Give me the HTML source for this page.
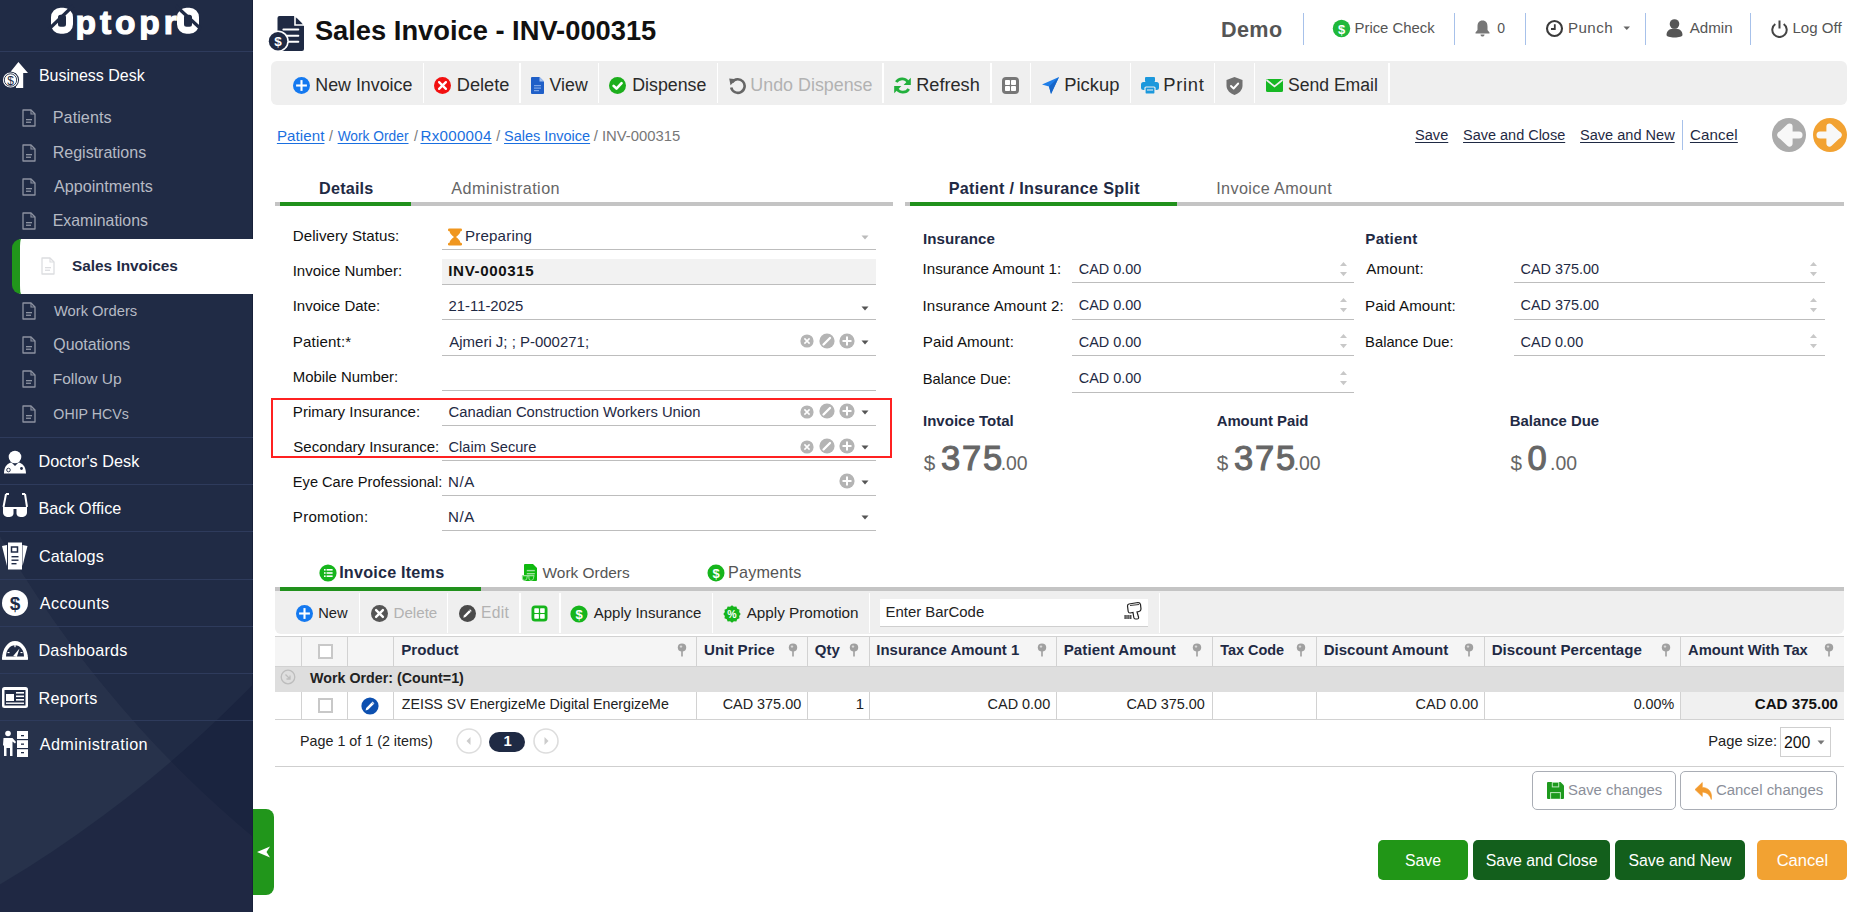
<!DOCTYPE html>
<html><head><meta charset="utf-8"><title>Sales Invoice</title>
<style>
html,body{margin:0;padding:0;width:1857px;height:912px;overflow:hidden;background:#fff;}
body{position:relative;font-family:"Liberation Sans",sans-serif;}
.t{position:absolute;white-space:nowrap;line-height:1;}
.b{position:absolute;}
.u{text-decoration:underline;text-underline-offset:2px;text-decoration-thickness:1px;}
</style></head><body>
<div class="b" style="left:0px;top:0px;width:253px;height:912px;background:#202b45;overflow:hidden"></div>
<svg class="b" style="left:0;top:0" width="253" height="912" viewBox="0 0 253 912"><path fill-rule="evenodd" d="M-10 -10 H263 V922 H-10 Z M-153 -32 A1133 1133 0 1 0 2113 -32 A1133 1133 0 1 0 -153 -32 Z" fill="#ffffff" fill-opacity="0.035"/><path fill-rule="evenodd" d="M-10 -10 H263 V922 H-10 Z M-1884 -184 A1245 1245 0 1 0 606 -184 A1245 1245 0 1 0 -1884 -184 Z" fill="#0c1333" fill-opacity="0.3"/></svg>
<div class="b" style="left:252px;top:0px;width:1px;height:912px;background:#18213a"></div>
<svg class="b" style="left:0px;top:0px" width="253" height="50" viewBox="0 0 253 50"><g fill="none" stroke="#fff" stroke-width="7"><rect x="54.5" y="11.3" width="15" height="19" rx="6"/><rect x="180.5" y="11.3" width="15" height="19" rx="6"/></g><line x1="73" y1="6" x2="49" y2="29" stroke="#202b45" stroke-width="3.2"/><line x1="176" y1="6" x2="201" y2="29" stroke="#202b45" stroke-width="3.2"/></svg>
<div class="b" style="left:0;top:0;width:253px;height:40px;overflow:hidden">
<div class="t " style="left:75.52px;top:6.100px;font-size:33.50px;color:#fff;font-weight:bold;letter-spacing:3.897px;-webkit-text-stroke:1.2px #fff;">ptopr</div>
</div>
<div class="b" style="left:0px;top:51px;width:253px;height:1px;background:#2e3b5c"></div>
<svg class="b" style="left:0px;top:0px" width="40" height="100" viewBox="0 0 40 100"><path d="M18.4 62 L28 73 L23.2 73 L23.2 88 L16 88 L16 73 L9.6 73 Z" fill="#fff"/><circle cx="10.5" cy="80" r="8.6" fill="#202b45"/><circle cx="10.5" cy="80" r="7.6" fill="#fff"/><circle cx="10.5" cy="80" r="6.2" fill="none" stroke="#202b45" stroke-width="0.9"/><text x="10.5" y="84.6" font-size="12" font-family="Liberation Sans" text-anchor="middle" fill="#202b45">$</text></svg>
<div class="t " style="left:38.92px;top:68.105px;font-size:15.99px;color:#fff;">Business Desk</div>
<svg class="b" style="left:22px;top:109.2px" width="14" height="18" viewBox="0 0 14 18"><path d="M1 1 H9 L13 5 V17 H1 Z" fill="none" stroke="#8d93a1" stroke-width="1.3" stroke-linejoin="round"/><path d="M9 1 V5 H13" fill="none" stroke="#8d93a1" stroke-width="1.1"/><rect x="4" y="10" width="6" height="1.3" fill="#8d93a1"/><rect x="4" y="12.6" width="5" height="1.3" fill="#8d93a1"/></svg>
<div class="t " style="left:52.70px;top:109.109px;font-size:16.20px;color:#b6bac4;letter-spacing:0.071px;">Patients</div>
<svg class="b" style="left:22px;top:143.6px" width="14" height="18" viewBox="0 0 14 18"><path d="M1 1 H9 L13 5 V17 H1 Z" fill="none" stroke="#8d93a1" stroke-width="1.3" stroke-linejoin="round"/><path d="M9 1 V5 H13" fill="none" stroke="#8d93a1" stroke-width="1.1"/><rect x="4" y="10" width="6" height="1.3" fill="#8d93a1"/><rect x="4" y="12.6" width="5" height="1.3" fill="#8d93a1"/></svg>
<div class="t " style="left:52.72px;top:144.116px;font-size:16.03px;color:#b6bac4;">Registrations</div>
<svg class="b" style="left:22px;top:178.2px" width="14" height="18" viewBox="0 0 14 18"><path d="M1 1 H9 L13 5 V17 H1 Z" fill="none" stroke="#8d93a1" stroke-width="1.3" stroke-linejoin="round"/><path d="M9 1 V5 H13" fill="none" stroke="#8d93a1" stroke-width="1.1"/><rect x="4" y="10" width="6" height="1.3" fill="#8d93a1"/><rect x="4" y="12.6" width="5" height="1.3" fill="#8d93a1"/></svg>
<div class="t " style="left:54.00px;top:178.110px;font-size:16.17px;color:#b6bac4;">Appointments</div>
<svg class="b" style="left:22px;top:212.4px" width="14" height="18" viewBox="0 0 14 18"><path d="M1 1 H9 L13 5 V17 H1 Z" fill="none" stroke="#8d93a1" stroke-width="1.3" stroke-linejoin="round"/><path d="M9 1 V5 H13" fill="none" stroke="#8d93a1" stroke-width="1.1"/><rect x="4" y="10" width="6" height="1.3" fill="#8d93a1"/><rect x="4" y="12.6" width="5" height="1.3" fill="#8d93a1"/></svg>
<div class="t " style="left:52.73px;top:213.109px;font-size:15.86px;color:#b6bac4;">Examinations</div>
<div class="b" style="left:12px;top:239px;width:241px;height:55px;background:#fff;border-radius:9px 0 0 9px;border-left:8px solid #21961b;box-sizing:border-box"></div>
<svg class="b" style="left:41px;top:257px" width="14" height="18" viewBox="0 0 14 18"><path d="M1 1 H9 L13 5 V17 H1 Z" fill="none" stroke="#dcdde0" stroke-width="1.3" stroke-linejoin="round"/><path d="M9 1 V5 H13" fill="none" stroke="#dcdde0" stroke-width="1.1"/><rect x="4" y="10" width="6" height="1.3" fill="#dcdde0"/><rect x="4" y="12.6" width="5" height="1.3" fill="#dcdde0"/></svg>
<div class="t " style="left:71.94px;top:258.113px;font-size:15.38px;color:#1f2a44;font-weight:bold;">Sales Invoices</div>
<svg class="b" style="left:22px;top:302.2px" width="14" height="18" viewBox="0 0 14 18"><path d="M1 1 H9 L13 5 V17 H1 Z" fill="none" stroke="#8d93a1" stroke-width="1.3" stroke-linejoin="round"/><path d="M9 1 V5 H13" fill="none" stroke="#8d93a1" stroke-width="1.1"/><rect x="4" y="10" width="6" height="1.3" fill="#8d93a1"/><rect x="4" y="12.6" width="5" height="1.3" fill="#8d93a1"/></svg>
<div class="t " style="left:53.93px;top:304.104px;font-size:14.74px;color:#b6bac4;">Work Orders</div>
<svg class="b" style="left:22px;top:336.4px" width="14" height="18" viewBox="0 0 14 18"><path d="M1 1 H9 L13 5 V17 H1 Z" fill="none" stroke="#8d93a1" stroke-width="1.3" stroke-linejoin="round"/><path d="M9 1 V5 H13" fill="none" stroke="#8d93a1" stroke-width="1.1"/><rect x="4" y="10" width="6" height="1.3" fill="#8d93a1"/><rect x="4" y="12.6" width="5" height="1.3" fill="#8d93a1"/></svg>
<div class="t " style="left:53.28px;top:337.109px;font-size:15.92px;color:#b6bac4;">Quotations</div>
<svg class="b" style="left:22px;top:370.4px" width="14" height="18" viewBox="0 0 14 18"><path d="M1 1 H9 L13 5 V17 H1 Z" fill="none" stroke="#8d93a1" stroke-width="1.3" stroke-linejoin="round"/><path d="M9 1 V5 H13" fill="none" stroke="#8d93a1" stroke-width="1.1"/><rect x="4" y="10" width="6" height="1.3" fill="#8d93a1"/><rect x="4" y="12.6" width="5" height="1.3" fill="#8d93a1"/></svg>
<div class="t " style="left:52.76px;top:371.108px;font-size:15.51px;color:#b6bac4;">Follow Up</div>
<svg class="b" style="left:22px;top:405.0px" width="14" height="18" viewBox="0 0 14 18"><path d="M1 1 H9 L13 5 V17 H1 Z" fill="none" stroke="#8d93a1" stroke-width="1.3" stroke-linejoin="round"/><path d="M9 1 V5 H13" fill="none" stroke="#8d93a1" stroke-width="1.1"/><rect x="4" y="10" width="6" height="1.3" fill="#8d93a1"/><rect x="4" y="12.6" width="5" height="1.3" fill="#8d93a1"/></svg>
<div class="t " style="left:53.36px;top:407.113px;font-size:14.19px;color:#b6bac4;">OHIP HCVs</div>
<div class="b" style="left:0px;top:437px;width:253px;height:1px;background:#2e3b5c"></div>
<div class="t " style="left:38.40px;top:453.109px;font-size:16.20px;color:#fff;letter-spacing:0.061px;">Doctor's Desk</div>
<div class="b" style="left:0px;top:484px;width:253px;height:1px;background:#2e3b5c"></div>
<div class="t " style="left:38.40px;top:500.109px;font-size:16.20px;color:#fff;letter-spacing:0.041px;">Back Office</div>
<div class="b" style="left:0px;top:531px;width:253px;height:1px;background:#2e3b5c"></div>
<div class="t " style="left:38.89px;top:548.109px;font-size:16.20px;color:#fff;letter-spacing:0.153px;">Catalogs</div>
<div class="b" style="left:0px;top:579px;width:253px;height:1px;background:#2e3b5c"></div>
<div class="t " style="left:39.70px;top:595.109px;font-size:16.20px;color:#fff;letter-spacing:0.415px;">Accounts</div>
<div class="b" style="left:0px;top:626px;width:253px;height:1px;background:#2e3b5c"></div>
<div class="t " style="left:38.40px;top:642.109px;font-size:16.20px;color:#fff;letter-spacing:0.172px;">Dashboards</div>
<div class="b" style="left:0px;top:673px;width:253px;height:1px;background:#2e3b5c"></div>
<div class="t " style="left:38.40px;top:690.109px;font-size:16.20px;color:#fff;letter-spacing:0.360px;">Reports</div>
<div class="b" style="left:0px;top:720px;width:253px;height:1px;background:#2e3b5c"></div>
<div class="t " style="left:39.70px;top:736.109px;font-size:16.20px;color:#fff;letter-spacing:0.411px;">Administration</div>
<svg class="b" style="left:0px;top:440px" width="34" height="40" viewBox="0 0 34 40"><circle cx="15" cy="17" r="6.3" fill="#fff"/><path d="M4 33.5 C4 26 8 23 11.5 22.5 L15 26 L18.5 22.5 C22 23 26 26 26 33.5 Z" fill="#fff"/><circle cx="8.5" cy="30" r="1.8" fill="none" stroke="#202b45" stroke-width="0.9"/><circle cx="21.5" cy="28.5" r="1.4" fill="#202b45"/></svg>
<svg class="b" style="left:0px;top:490px" width="34" height="32" viewBox="0 0 34 32"><path d="M6 4 L9 4 M6 4 L3.5 17" stroke="#fff" stroke-width="2" fill="none"/><path d="M25 4 L22 4 M25 4 L27 17" stroke="#fff" stroke-width="2" fill="none"/><path d="M3 17 H13.5 V23 C13.5 26 11.5 27 8.5 27 C5 27 3 25.5 3 22 Z" fill="#fff"/><path d="M16.5 17 H27 V22 C27 25.5 25 27 21.5 27 C18.5 27 16.5 26 16.5 23 Z" fill="#fff"/><rect x="13" y="17" width="4" height="2" fill="#fff"/></svg>
<svg class="b" style="left:0px;top:540px" width="34" height="32" viewBox="0 0 34 32"><path d="M2 6 L7 5 L7 26 Z" fill="#fff"/><path d="M27.5 6 L22.5 5 L22.5 26 Z" fill="#fff"/><rect x="8" y="2.5" width="14" height="27" fill="#fff"/><rect x="11.5" y="7" width="6" height="5" fill="none" stroke="#202b45" stroke-width="1.5"/><rect x="11.5" y="16" width="7" height="1.4" fill="#202b45"/><rect x="11.5" y="19.5" width="7" height="1.4" fill="#202b45"/><rect x="11.5" y="23" width="5" height="1.4" fill="#202b45"/></svg>
<svg class="b" style="left:0px;top:588px" width="34" height="32" viewBox="0 0 34 32"><circle cx="15" cy="15" r="13" fill="#fff"/><text x="15" y="22" font-size="19" font-weight="bold" font-family="Liberation Sans" text-anchor="middle" fill="#202b45">$</text></svg>
<svg class="b" style="left:0px;top:638px" width="34" height="26" viewBox="0 0 34 26"><path d="M2 21.5 C2 10.5 8 3 15 3 C22 3 28 10.5 28 21.5 Z" fill="#fff"/><path d="M6 18.5 C6 12 10 7.2 15 7.2 C20 7.2 24 12 24 18.5 Z" fill="#202b45"/><path d="M13.2 18 L19.5 10.5 L16.8 19 Z" fill="#fff"/><rect x="14.4" y="7" width="1.2" height="2.2" fill="#fff"/><rect x="7.5" y="14" width="2" height="1.1" fill="#fff"/><rect x="20.5" y="14" width="2" height="1.1" fill="#fff"/><rect x="2" y="19" width="26" height="2.8" rx="0.8" fill="#fff"/></svg>
<svg class="b" style="left:0px;top:684px" width="34" height="28" viewBox="0 0 34 28"><rect x="2" y="3" width="26" height="21" rx="2.5" fill="#fff"/><rect x="4.5" y="6" width="21" height="15.5" fill="#202b45"/><rect x="6" y="10" width="8" height="7" fill="#fff"/><rect x="16" y="8" width="8" height="1.6" fill="#fff"/><rect x="16" y="11.5" width="8" height="1.6" fill="#fff"/><rect x="16" y="15" width="8" height="1.6" fill="#fff"/><rect x="6" y="18.5" width="18" height="1.4" fill="#fff"/></svg>
<svg class="b" style="left:0px;top:728px" width="34" height="32" viewBox="0 0 34 32"><circle cx="8" cy="5.5" r="2.8" fill="#fff"/><path d="M3.5 10 H12.5 L16 14 L15 15.5 L12.5 13.5 V28 H10 V20 H6.5 V28 H4 V18 L3 17 Z" fill="#fff"/><rect x="17" y="3" width="11" height="26" fill="#fff"/><rect x="17" y="11" width="11" height="1.2" fill="#202b45"/><rect x="17" y="20" width="11" height="1.2" fill="#202b45"/><rect x="21" y="7" width="3" height="1.3" fill="#202b45"/><rect x="21" y="15.5" width="3" height="1.3" fill="#202b45"/><rect x="21" y="24" width="3" height="1.3" fill="#202b45"/></svg>
<div class="b" style="left:253px;top:809px;width:21px;height:86px;background:#21961b;border-radius:0 8px 8px 0"></div>
<svg class="b" style="left:253px;top:840px" width="21" height="24" viewBox="0 0 21 24"><path d="M4 12 L17 6.5 L13.5 12 L17 17.5 Z" fill="#fff"/></svg>
<svg class="b" style="left:264px;top:12px" width="44" height="44" viewBox="0 0 44 44"><path d="M13.5 6 Q13.5 4 15.5 4 H30.2 L40 13.8 V37 Q40 39 38 39 H15.5 Q13.5 39 13.5 37 Z" fill="#1f2a44"/><path d="M31 3 V13 H41" fill="none" stroke="#fff" stroke-width="1.6"/><path d="M32.3 5.5 L38.6 11.8 H32.3 Z" fill="#1f2a44"/><rect x="18.4" y="16.4" width="16.9" height="2" rx="1" fill="#fff"/><rect x="18.4" y="22.7" width="16.9" height="2" rx="1" fill="#fff"/><rect x="18.4" y="28.7" width="16.9" height="2" rx="1" fill="#fff"/><circle cx="14" cy="29.2" r="10.8" fill="#fff"/><circle cx="14" cy="29.2" r="9.2" fill="#1f2a44"/><text x="14" y="34.4" font-size="13.5" font-weight="bold" font-family="Liberation Sans" text-anchor="middle" fill="#fff">$</text></svg>
<div class="t " style="left:314.88px;top:17.102px;font-size:27.31px;color:#111;font-weight:bold;">Sales Invoice - INV-000315</div>
<div class="t " style="left:1221.00px;top:19.113px;font-size:21.60px;color:#555;font-weight:bold;letter-spacing:0.371px;">Demo</div>
<div class="b" style="left:1303px;top:13px;width:1px;height:32px;background:#a7c1ea"></div>
<div class="b" style="left:1454px;top:13px;width:1px;height:32px;background:#a7c1ea"></div>
<div class="b" style="left:1525px;top:13px;width:1px;height:32px;background:#a7c1ea"></div>
<div class="b" style="left:1645px;top:13px;width:1px;height:32px;background:#a7c1ea"></div>
<div class="b" style="left:1750px;top:13px;width:1px;height:32px;background:#a7c1ea"></div>
<svg class="b" style="left:1332px;top:19px" width="19" height="19" viewBox="0 0 19 19"><circle cx="9.5" cy="9.5" r="8.7" fill="#1fb83a"/><text x="9.5" y="14.5" font-size="13" font-weight="bold" font-family="Liberation Sans" text-anchor="middle" fill="#fff">$</text></svg>
<div class="t " style="left:1354.51px;top:21.114px;font-size:14.88px;color:#555;">Price Check</div>
<svg class="b" style="left:1474px;top:19px" width="17" height="18" viewBox="0 0 17 18"><path d="M8.5 1.5 C5 1.5 3.5 4 3.5 7.5 V11 L1.5 13.5 V14.5 H15.5 V13.5 L13.5 11 V7.5 C13.5 4 12 1.5 8.5 1.5 Z" fill="#777"/><path d="M6.5 15.5 H10.5 C10.5 17 9.5 17.5 8.5 17.5 C7.5 17.5 6.5 17 6.5 15.5Z" fill="#777"/></svg>
<div class="t " style="left:1497.14px;top:21.100px;font-size:14.00px;color:#555;">0</div>
<svg class="b" style="left:1545px;top:19px" width="19" height="19" viewBox="0 0 19 19"><circle cx="9.5" cy="9.5" r="7.5" fill="none" stroke="#3a3a3a" stroke-width="2.1"/><path d="M9.8 5.2 V10 H6" fill="none" stroke="#3a3a3a" stroke-width="1.8"/></svg>
<div class="t " style="left:1567.99px;top:20.102px;font-size:15.12px;color:#555;letter-spacing:0.438px;">Punch</div>
<svg class="b" style="left:1622px;top:25px" width="10" height="6" viewBox="0 0 10 6"><path d="M1.5 1.5 H8 L4.75 5 Z" fill="#666"/></svg>
<svg class="b" style="left:1665px;top:18px" width="19" height="20" viewBox="0 0 19 20"><circle cx="9.5" cy="6" r="4.8" fill="#555"/><path d="M1.5 17 C1.5 12.5 5 10.5 9.5 10.5 C14 10.5 17.5 12.5 17.5 17 C17.5 18.5 14 19.5 9.5 19.5 C5 19.5 1.5 18.5 1.5 17Z" fill="#555"/></svg>
<div class="t " style="left:1689.70px;top:20.102px;font-size:15.12px;color:#555;letter-spacing:0.011px;">Admin</div>
<svg class="b" style="left:1770px;top:19px" width="19" height="19" viewBox="0 0 19 19"><path d="M5.3 5 A7.2 7.2 0 1 0 13.7 5" fill="none" stroke="#444" stroke-width="2"/><rect x="8.5" y="1.5" width="2" height="8" fill="#444"/></svg>
<div class="t " style="left:1792.49px;top:20.112px;font-size:15.07px;color:#555;">Log Off</div>
<div class="b" style="left:271px;top:60.7px;width:1576px;height:44.7px;background:#efefef;border-radius:6px"></div>
<div class="b" style="left:422.8px;top:63px;width:1.4px;height:40px;background:#ffffff"></div>
<div class="b" style="left:519.2px;top:63px;width:1.4px;height:40px;background:#ffffff"></div>
<div class="b" style="left:597.8px;top:63px;width:1.4px;height:40px;background:#ffffff"></div>
<div class="b" style="left:716.8px;top:63px;width:1.4px;height:40px;background:#ffffff"></div>
<div class="b" style="left:882.2px;top:63px;width:1.4px;height:40px;background:#ffffff"></div>
<div class="b" style="left:990.4px;top:63px;width:1.4px;height:40px;background:#ffffff"></div>
<div class="b" style="left:1029.8px;top:63px;width:1.4px;height:40px;background:#ffffff"></div>
<div class="b" style="left:1129.8px;top:63px;width:1.4px;height:40px;background:#ffffff"></div>
<div class="b" style="left:1213.8px;top:63px;width:1.4px;height:40px;background:#ffffff"></div>
<div class="b" style="left:1253.8px;top:63px;width:1.4px;height:40px;background:#ffffff"></div>
<div class="b" style="left:1388.2px;top:63px;width:1.4px;height:40px;background:#ffffff"></div>
<svg class="b" style="left:293px;top:77px" width="17" height="17" viewBox="0 0 17 17"><circle cx="8.5" cy="8.5" r="8.5" fill="#1479f0"/><rect x="7.45" y="3.0999999999999996" width="2.1" height="10.8" fill="#fff"/><rect x="3.0999999999999996" y="7.45" width="10.8" height="2.1" fill="#fff"/></svg>
<div class="t " style="left:315.27px;top:77.102px;font-size:17.84px;color:#2a2a2a;">New Invoice</div>
<svg class="b" style="left:433.5px;top:77px" width="17" height="17" viewBox="0 0 17 17"><circle cx="8.5" cy="8.5" r="8.5" fill="#f21010"/><path d="M5.1 5.1 L11.9 11.9 M11.9 5.1 L5.1 11.9" stroke="#fff" stroke-width="2.3" stroke-linecap="round"/></svg>
<div class="t " style="left:456.74px;top:76.109px;font-size:18.23px;color:#2a2a2a;">Delete</div>
<svg class="b" style="left:530px;top:76px" width="15" height="19" viewBox="0 0 15 19"><path d="M1 2 Q1 1 2 1 H9.5 L14 5.5 V17 Q14 18 13 18 H2 Q1 18 1 17 Z" fill="#1f5fc8"/><path d="M9.5 1 V5.5 H14" fill="#9fbff0"/><rect x="4" y="9" width="7" height="1.2" fill="#7fa6e6"/><rect x="4" y="11.5" width="7" height="1.2" fill="#7fa6e6"/><rect x="4" y="14" width="5" height="1.2" fill="#7fa6e6"/></svg>
<div class="t " style="left:549.61px;top:77.102px;font-size:17.72px;color:#2a2a2a;">View</div>
<svg class="b" style="left:609px;top:77px" width="17" height="17" viewBox="0 0 17 17"><circle cx="8.5" cy="8.5" r="8.5" fill="#1cae1c"/><path d="M4.59 8.84 L7.48 11.56 L12.58 6.12" fill="none" stroke="#fff" stroke-width="2.6" stroke-linecap="round" stroke-linejoin="round"/></svg>
<div class="t " style="left:632.28px;top:77.102px;font-size:17.78px;color:#2a2a2a;">Dispense</div>
<svg class="b" style="left:728px;top:76px" width="19" height="19" viewBox="0 0 19 19"><path d="M4.2 6.2 A6.8 6.8 0 1 1 3.2 11.5" fill="none" stroke="#666" stroke-width="2.6"/><path d="M1.2 2.5 L8.5 3.2 L2.5 9.2 Z" fill="#666"/></svg>
<div class="t " style="left:750.36px;top:77.109px;font-size:17.86px;color:#b2b2b2;">Undo Dispense</div>
<svg class="b" style="left:893px;top:76px" width="19" height="19" viewBox="0 0 19 19"><path d="M15.5 7 A7 7 0 0 0 3.2 6" fill="none" stroke="#22b03c" stroke-width="2.8"/><path d="M3.5 12 A7 7 0 0 0 15.8 13" fill="none" stroke="#22b03c" stroke-width="2.8"/><path d="M17.8 1.8 V9 H10.6 Z" fill="#22b03c"/><path d="M1.2 17.2 V10 H8.4 Z" fill="#22b03c"/></svg>
<div class="t " style="left:916.25px;top:76.101px;font-size:18.15px;color:#2a2a2a;">Refresh</div>
<svg class="b" style="left:1001px;top:76px" width="19" height="19" viewBox="0 0 19 19"><rect x="1" y="1" width="17" height="17" rx="4" fill="#777"/><rect x="4" y="4" width="5" height="5" rx="0.8" fill="#fff"/><rect x="10" y="4" width="5" height="5" rx="0.8" fill="#fff"/><rect x="4" y="10" width="5" height="5" rx="0.8" fill="#fff"/><rect x="10" y="10" width="5" height="5" rx="0.8" fill="#fff"/></svg>
<svg class="b" style="left:1041px;top:76px" width="19" height="19" viewBox="0 0 19 19"><path d="M18 1 L1 8.5 L8 10.5 L10 18 Z" fill="#1f7ee8"/><path d="M18 1 L8 10.5 L10 18 Z" fill="#1665c8"/></svg>
<div class="t " style="left:1064.23px;top:76.107px;font-size:18.36px;color:#2a2a2a;letter-spacing:0.025px;">Pickup</div>
<svg class="b" style="left:1140px;top:76px" width="20" height="19" viewBox="0 0 20 19"><rect x="5" y="1" width="10" height="5" rx="1" fill="#1c98dc"/><rect x="1" y="6" width="18" height="8" rx="2.5" fill="#1c98dc"/><rect x="5" y="11" width="10" height="7" rx="1" fill="#1c98dc" stroke="#efefef" stroke-width="1.2"/><rect x="7" y="13.5" width="6" height="1" fill="#efefef"/></svg>
<div class="t " style="left:1163.23px;top:76.107px;font-size:18.36px;color:#2a2a2a;letter-spacing:0.708px;">Print</div>
<svg class="b" style="left:1225px;top:76px" width="19" height="20" viewBox="0 0 19 20"><path d="M9.5 1 L17.5 4 V9.5 C17.5 14 14 17.5 9.5 19 C5 17.5 1.5 14 1.5 9.5 V4 Z" fill="#707070"/><path d="M6 10 L8.6 12.5 L13.2 7.5" fill="none" stroke="#fff" stroke-width="1.9" stroke-linecap="round" stroke-linejoin="round"/></svg>
<svg class="b" style="left:1265px;top:77px" width="19" height="17" viewBox="0 0 19 17"><rect x="1" y="2" width="17" height="13" rx="1.5" fill="#17b824"/><path d="M1.5 3 L9.5 9.5 L17.5 3" fill="none" stroke="#efefef" stroke-width="1.7"/></svg>
<div class="t " style="left:1287.91px;top:77.112px;font-size:17.60px;color:#2a2a2a;">Send Email</div>
<div class="t u" style="left:276.89px;top:128.102px;font-size:15.12px;color:#1a6fe0;letter-spacing:0.077px;">Patient</div>
<div class="t " style="left:329.10px;top:129.100px;font-size:14.00px;color:#777;">/</div>
<div class="t u" style="left:337.63px;top:130.115px;font-size:13.78px;color:#1a6fe0;">Work Order</div>
<div class="t " style="left:414.10px;top:129.100px;font-size:14.00px;color:#777;">/</div>
<div class="t u" style="left:420.49px;top:128.102px;font-size:15.12px;color:#1a6fe0;letter-spacing:0.291px;">Rx000004</div>
<div class="t " style="left:496.30px;top:129.100px;font-size:14.00px;color:#777;">/</div>
<div class="t u" style="left:504.05px;top:129.115px;font-size:14.47px;color:#1a6fe0;">Sales Invoice</div>
<div class="t " style="left:593.70px;top:129.102px;font-size:14.84px;color:#777;">/ INV-000315</div>
<div class="t u" style="left:1415.04px;top:128.108px;font-size:14.58px;color:#1f2a44;">Save</div>
<div class="t u" style="left:1463.05px;top:128.110px;font-size:14.48px;color:#1f2a44;">Save and Close</div>
<div class="t u" style="left:1580.05px;top:128.106px;font-size:14.55px;color:#1f2a44;">Save and New</div>
<div class="b" style="left:1682px;top:120px;width:1px;height:30px;background:#a7c1ea"></div>
<div class="t u" style="left:1689.94px;top:127.102px;font-size:15.12px;color:#1f2a44;letter-spacing:0.143px;">Cancel</div>
<svg class="b" style="left:1772px;top:118px" width="35" height="35" viewBox="0 0 35 35"><circle cx="17" cy="17" r="17" fill="#ababab"/><path d="M17.5 8.5 L8.5 17 L17.5 25.5 Z" fill="#f8f8f8" stroke="#f8f8f8" stroke-width="6.2" stroke-linecap="round" stroke-linejoin="round"/><path d="M9 17 H27" stroke="#f8f8f8" stroke-width="7" stroke-linecap="round"/></svg>
<svg class="b" style="left:1813px;top:118px" width="35" height="35" viewBox="0 0 35 35"><circle cx="17" cy="17" r="17" fill="#f2a232"/><path d="M16.5 8.5 L25.5 17 L16.5 25.5 Z" fill="#f8f8f8" stroke="#f8f8f8" stroke-width="6.2" stroke-linecap="round" stroke-linejoin="round"/><path d="M25 17 H7" stroke="#f8f8f8" stroke-width="7" stroke-linecap="round"/></svg>
<div class="b" style="left:275px;top:202px;width:618px;height:4px;background:#c4c4c4"></div>
<div class="b" style="left:280px;top:202px;width:131px;height:4px;background:#21911c"></div>
<div class="t " style="left:319.05px;top:180.109px;font-size:16.20px;color:#1f2a44;font-weight:bold;letter-spacing:0.194px;">Details</div>
<div class="t " style="left:451.30px;top:180.109px;font-size:16.20px;color:#666;letter-spacing:0.442px;">Administration</div>
<div class="b" style="left:905px;top:202px;width:939px;height:4px;background:#c4c4c4"></div>
<div class="b" style="left:910px;top:202px;width:267px;height:4px;background:#21911c"></div>
<div class="t " style="left:948.65px;top:180.109px;font-size:16.20px;color:#1f2a44;font-weight:bold;letter-spacing:0.308px;">Patient / Insurance Split</div>
<div class="t " style="left:1216.24px;top:180.109px;font-size:16.20px;color:#666;letter-spacing:0.370px;">Invoice Amount</div>
<div class="t " style="left:292.79px;top:228.102px;font-size:15.12px;color:#111;letter-spacing:0.044px;">Delivery Status:</div>
<div class="b" style="left:442px;top:249px;width:434px;height:1px;background:#bdbdbd"></div>
<div class="t " style="left:292.64px;top:263.101px;font-size:15.06px;color:#111;">Invoice Number:</div>
<div class="b" style="left:442px;top:259px;width:434px;height:25.5px;background:#f2f2f2"></div>
<div class="b" style="left:442px;top:284px;width:434px;height:1px;background:#bdbdbd"></div>
<div class="t " style="left:292.65px;top:298.107px;font-size:15.02px;color:#111;">Invoice Date:</div>
<div class="b" style="left:442px;top:319px;width:434px;height:1px;background:#bdbdbd"></div>
<div class="t " style="left:292.79px;top:334.103px;font-size:15.12px;color:#111;letter-spacing:0.160px;">Patient:*</div>
<div class="b" style="left:442px;top:355px;width:434px;height:1px;background:#bdbdbd"></div>
<div class="t " style="left:292.80px;top:370.110px;font-size:14.95px;color:#111;">Mobile Number:</div>
<div class="b" style="left:442px;top:390px;width:434px;height:1px;background:#bdbdbd"></div>
<div class="t " style="left:292.79px;top:404.103px;font-size:15.12px;color:#111;letter-spacing:0.038px;">Primary Insurance:</div>
<div class="b" style="left:442px;top:425px;width:434px;height:1px;background:#bdbdbd"></div>
<div class="t " style="left:293.32px;top:439.112px;font-size:15.01px;color:#111;">Secondary Insurance:</div>
<div class="b" style="left:442px;top:460px;width:434px;height:1px;background:#bdbdbd"></div>
<div class="t " style="left:292.83px;top:475.106px;font-size:14.61px;color:#111;">Eye Care Professional:</div>
<div class="b" style="left:442px;top:495px;width:434px;height:1px;background:#bdbdbd"></div>
<div class="t " style="left:292.79px;top:509.103px;font-size:15.12px;color:#111;letter-spacing:0.266px;">Promotion:</div>
<div class="b" style="left:442px;top:530px;width:434px;height:1px;background:#bdbdbd"></div>
<svg class="b" style="left:447px;top:227.5px" width="16" height="18" viewBox="0 0 16 18"><rect x="1" y="0.5" width="14" height="2.8" rx="1.2" fill="#f0961e"/><rect x="1" y="14.7" width="14" height="2.8" rx="1.2" fill="#f0961e"/><path d="M2.6 3 H13.4 C13.4 6 10.5 7.6 9 9 C10.5 10.4 13.4 12 13.4 15 H2.6 C2.6 12 5.5 10.4 7 9 C5.5 7.6 2.6 6 2.6 3 Z" fill="#f0961e"/></svg>
<div class="t " style="left:464.89px;top:228.102px;font-size:15.12px;color:#1f2a44;letter-spacing:0.196px;">Preparing</div>
<svg class="b" style="left:861px;top:234.5px" width="8" height="5" viewBox="0 0 8 5"><path d="M0.5 0.5 H7.5 L4 4.5 Z" fill="#bbb"/></svg>
<div class="t " style="left:448.32px;top:263.103px;font-size:15.12px;color:#111;font-weight:bold;letter-spacing:0.614px;">INV-000315</div>
<div class="t " style="left:448.56px;top:299.113px;font-size:14.85px;color:#1f2a44;">21-11-2025</div>
<svg class="b" style="left:861px;top:305.5px" width="8" height="5" viewBox="0 0 8 5"><path d="M0.5 0.5 H7.5 L4 4.5 Z" fill="#555"/></svg>
<div class="t " style="left:449.30px;top:335.114px;font-size:14.97px;color:#1f2a44;">Ajmeri J; ; P-000271;</div>
<svg class="b" style="left:799.5px;top:334.0px" width="14" height="14" viewBox="0 0 14 14"><circle cx="7" cy="7" r="6.6" fill="#b4b4b4"/><path d="M4.4 4.4 L9.6 9.6 M9.6 4.4 L4.4 9.6" stroke="#fff" stroke-width="1.5"/></svg>
<svg class="b" style="left:818.5px;top:332.5px" width="16" height="16" viewBox="0 0 16 16"><circle cx="8" cy="8" r="7.6" fill="#b4b4b4"/><path d="M4.5 11.5 L11 5" stroke="#fff" stroke-width="2.3" stroke-linecap="round"/></svg>
<svg class="b" style="left:838.5px;top:332.5px" width="16" height="16" viewBox="0 0 16 16"><circle cx="8" cy="8" r="7.6" fill="#b4b4b4"/><rect x="7" y="3.5" width="2" height="9" fill="#fff"/><rect x="3.5" y="7" width="9" height="2" fill="#fff"/></svg>
<svg class="b" style="left:861px;top:339.5px" width="8" height="5" viewBox="0 0 8 5"><path d="M0.5 0.5 H7.5 L4 4.5 Z" fill="#555"/></svg>
<svg class="b" style="left:799.5px;top:404.5px" width="14" height="14" viewBox="0 0 14 14"><circle cx="7" cy="7" r="6.6" fill="#b4b4b4"/><path d="M4.4 4.4 L9.6 9.6 M9.6 4.4 L4.4 9.6" stroke="#fff" stroke-width="1.5"/></svg>
<svg class="b" style="left:818.5px;top:403.0px" width="16" height="16" viewBox="0 0 16 16"><circle cx="8" cy="8" r="7.6" fill="#b4b4b4"/><path d="M4.5 11.5 L11 5" stroke="#fff" stroke-width="2.3" stroke-linecap="round"/></svg>
<svg class="b" style="left:838.5px;top:403.0px" width="16" height="16" viewBox="0 0 16 16"><circle cx="8" cy="8" r="7.6" fill="#b4b4b4"/><rect x="7" y="3.5" width="2" height="9" fill="#fff"/><rect x="3.5" y="7" width="9" height="2" fill="#fff"/></svg>
<svg class="b" style="left:861px;top:410.0px" width="8" height="5" viewBox="0 0 8 5"><path d="M0.5 0.5 H7.5 L4 4.5 Z" fill="#555"/></svg>
<svg class="b" style="left:799.5px;top:439.5px" width="14" height="14" viewBox="0 0 14 14"><circle cx="7" cy="7" r="6.6" fill="#b4b4b4"/><path d="M4.4 4.4 L9.6 9.6 M9.6 4.4 L4.4 9.6" stroke="#fff" stroke-width="1.5"/></svg>
<svg class="b" style="left:818.5px;top:438.0px" width="16" height="16" viewBox="0 0 16 16"><circle cx="8" cy="8" r="7.6" fill="#b4b4b4"/><path d="M4.5 11.5 L11 5" stroke="#fff" stroke-width="2.3" stroke-linecap="round"/></svg>
<svg class="b" style="left:838.5px;top:438.0px" width="16" height="16" viewBox="0 0 16 16"><circle cx="8" cy="8" r="7.6" fill="#b4b4b4"/><rect x="7" y="3.5" width="2" height="9" fill="#fff"/><rect x="3.5" y="7" width="9" height="2" fill="#fff"/></svg>
<svg class="b" style="left:861px;top:445.0px" width="8" height="5" viewBox="0 0 8 5"><path d="M0.5 0.5 H7.5 L4 4.5 Z" fill="#555"/></svg>
<svg class="b" style="left:838.5px;top:473.0px" width="16" height="16" viewBox="0 0 16 16"><circle cx="8" cy="8" r="7.6" fill="#b4b4b4"/><rect x="7" y="3.5" width="2" height="9" fill="#fff"/><rect x="3.5" y="7" width="9" height="2" fill="#fff"/></svg>
<svg class="b" style="left:861px;top:480.0px" width="8" height="5" viewBox="0 0 8 5"><path d="M0.5 0.5 H7.5 L4 4.5 Z" fill="#555"/></svg>
<svg class="b" style="left:861px;top:515.0px" width="8" height="5" viewBox="0 0 8 5"><path d="M0.5 0.5 H7.5 L4 4.5 Z" fill="#555"/></svg>
<div class="t " style="left:448.56px;top:405.113px;font-size:14.79px;color:#1f2a44;">Canadian Construction Workers Union</div>
<div class="t " style="left:448.57px;top:440.110px;font-size:14.64px;color:#1f2a44;">Claim Secure</div>
<div class="t " style="left:448.09px;top:474.103px;font-size:15.12px;color:#1f2a44;letter-spacing:0.517px;">N/A</div>
<div class="t " style="left:448.09px;top:509.103px;font-size:15.12px;color:#1f2a44;letter-spacing:0.517px;">N/A</div>
<div class="b" style="left:271px;top:398px;width:621px;height:60px;border:2px solid #ff2121;box-sizing:border-box"></div>
<div class="t " style="left:923.12px;top:231.102px;font-size:15.12px;color:#1f2a44;font-weight:bold;letter-spacing:0.037px;">Insurance</div>
<div class="t " style="left:1365.32px;top:231.102px;font-size:15.12px;color:#1f2a44;font-weight:bold;letter-spacing:0.247px;">Patient</div>
<div class="t " style="left:922.54px;top:261.103px;font-size:15.12px;color:#111;">Insurance Amount 1:</div>
<div class="b" style="left:1072px;top:282px;width:282px;height:1px;background:#bdbdbd"></div>
<div class="t " style="left:1078.78px;top:262.111px;font-size:14.45px;color:#1f2a44;">CAD 0.00</div>
<svg class="b" style="left:1338.5px;top:260.5px" width="9" height="17" viewBox="0 0 9 17"><path d="M1 5 L4.5 1 L8 5 Z" fill="#c8c8c8"/><path d="M1 11 L4.5 15.3 L8 11 Z" fill="#c8c8c8"/></svg>
<div class="t " style="left:922.54px;top:298.103px;font-size:15.12px;color:#111;letter-spacing:0.139px;">Insurance Amount 2:</div>
<div class="b" style="left:1072px;top:319px;width:282px;height:1px;background:#bdbdbd"></div>
<div class="t " style="left:1078.78px;top:298.111px;font-size:14.45px;color:#1f2a44;">CAD 0.00</div>
<svg class="b" style="left:1338.5px;top:297.0px" width="9" height="17" viewBox="0 0 9 17"><path d="M1 5 L4.5 1 L8 5 Z" fill="#c8c8c8"/><path d="M1 11 L4.5 15.3 L8 11 Z" fill="#c8c8c8"/></svg>
<div class="t " style="left:922.69px;top:334.103px;font-size:15.12px;color:#111;letter-spacing:0.119px;">Paid Amount:</div>
<div class="b" style="left:1072px;top:355px;width:282px;height:1px;background:#bdbdbd"></div>
<div class="t " style="left:1078.78px;top:335.111px;font-size:14.45px;color:#1f2a44;">CAD 0.00</div>
<svg class="b" style="left:1338.5px;top:333.2px" width="9" height="17" viewBox="0 0 9 17"><path d="M1 5 L4.5 1 L8 5 Z" fill="#c8c8c8"/><path d="M1 11 L4.5 15.3 L8 11 Z" fill="#c8c8c8"/></svg>
<div class="t " style="left:922.72px;top:372.106px;font-size:14.74px;color:#111;">Balance Due:</div>
<div class="b" style="left:1072px;top:392px;width:282px;height:1px;background:#bdbdbd"></div>
<div class="t " style="left:1078.78px;top:371.111px;font-size:14.45px;color:#1f2a44;">CAD 0.00</div>
<svg class="b" style="left:1338.5px;top:370.0px" width="9" height="17" viewBox="0 0 9 17"><path d="M1 5 L4.5 1 L8 5 Z" fill="#c8c8c8"/><path d="M1 11 L4.5 15.3 L8 11 Z" fill="#c8c8c8"/></svg>
<div class="t " style="left:1366.30px;top:261.103px;font-size:15.12px;color:#111;letter-spacing:0.173px;">Amount:</div>
<div class="b" style="left:1514px;top:282px;width:311px;height:1px;background:#bdbdbd"></div>
<div class="t " style="left:1520.58px;top:262.108px;font-size:14.42px;color:#1f2a44;">CAD 375.00</div>
<svg class="b" style="left:1809px;top:260.5px" width="9" height="17" viewBox="0 0 9 17"><path d="M1 5 L4.5 1 L8 5 Z" fill="#c8c8c8"/><path d="M1 11 L4.5 15.3 L8 11 Z" fill="#c8c8c8"/></svg>
<div class="t " style="left:1365.09px;top:298.103px;font-size:15.12px;color:#111;letter-spacing:0.064px;">Paid Amount:</div>
<div class="b" style="left:1514px;top:319px;width:311px;height:1px;background:#bdbdbd"></div>
<div class="t " style="left:1520.58px;top:298.108px;font-size:14.42px;color:#1f2a44;">CAD 375.00</div>
<svg class="b" style="left:1809px;top:297.0px" width="9" height="17" viewBox="0 0 9 17"><path d="M1 5 L4.5 1 L8 5 Z" fill="#c8c8c8"/><path d="M1 11 L4.5 15.3 L8 11 Z" fill="#c8c8c8"/></svg>
<div class="t " style="left:1365.12px;top:335.106px;font-size:14.74px;color:#111;">Balance Due:</div>
<div class="b" style="left:1514px;top:355px;width:311px;height:1px;background:#bdbdbd"></div>
<div class="t " style="left:1520.58px;top:335.111px;font-size:14.45px;color:#1f2a44;">CAD 0.00</div>
<svg class="b" style="left:1809px;top:333.2px" width="9" height="17" viewBox="0 0 9 17"><path d="M1 5 L4.5 1 L8 5 Z" fill="#c8c8c8"/><path d="M1 11 L4.5 15.3 L8 11 Z" fill="#c8c8c8"/></svg>
<div class="t " style="left:923.02px;top:413.105px;font-size:15.02px;color:#1f2a44;font-weight:bold;">Invoice Total</div>
<div class="t " style="left:923.79px;top:453.113px;font-size:20.75px;color:#666;">$</div>
<div class="t " style="left:941.09px;top:441.100px;font-size:34.50px;color:#666;letter-spacing:1.723px;-webkit-text-stroke:1.1px #666;">375</div>
<div class="t " style="left:1000.65px;top:454.114px;font-size:19.44px;color:#666;">.00</div>
<div class="t " style="left:1216.63px;top:414.105px;font-size:14.90px;color:#1f2a44;font-weight:bold;">Amount Paid</div>
<div class="t " style="left:1216.79px;top:453.113px;font-size:20.75px;color:#666;">$</div>
<div class="t " style="left:1234.09px;top:441.100px;font-size:34.50px;color:#666;letter-spacing:1.723px;-webkit-text-stroke:1.1px #666;">375</div>
<div class="t " style="left:1293.65px;top:454.114px;font-size:19.44px;color:#666;">.00</div>
<div class="t " style="left:1509.73px;top:414.102px;font-size:14.90px;color:#1f2a44;font-weight:bold;">Balance Due</div>
<div class="t " style="left:1510.49px;top:453.113px;font-size:20.75px;color:#666;">$</div>
<div class="t " style="left:1527.62px;top:441.100px;font-size:34.50px;color:#666;-webkit-text-stroke:1.1px #666;">0</div>
<div class="t " style="left:1550.05px;top:454.114px;font-size:19.44px;color:#666;">.00</div>
<div class="b" style="left:275px;top:587px;width:1569px;height:4px;background:#c4c4c4"></div>
<div class="b" style="left:280px;top:587px;width:201px;height:4px;background:#21911c"></div>
<svg class="b" style="left:318.5px;top:563.5px" width="18" height="18" viewBox="0 0 18 18"><circle cx="9" cy="9" r="8.6" fill="#16b51c"/><rect x="5" y="5" width="1.6" height="1.6" fill="#fff"/><rect x="7.6" y="5" width="6" height="1.6" fill="#fff"/><rect x="5" y="8.2" width="1.6" height="1.6" fill="#fff"/><rect x="7.6" y="8.2" width="6" height="1.6" fill="#fff"/><rect x="5" y="11.4" width="1.6" height="1.6" fill="#fff"/><rect x="7.6" y="11.4" width="6" height="1.6" fill="#fff"/></svg>
<div class="t " style="left:339.15px;top:564.109px;font-size:16.20px;color:#1f2a44;font-weight:bold;letter-spacing:0.206px;">Invoice Items</div>
<svg class="b" style="left:515px;top:558px" width="30" height="28" viewBox="0 0 30 28"><path d="M9 7 Q9 6 10 6 H18 L22 10 V22 Q22 23 21 23 H10 Q9 23 9 22 Z" fill="#10b910"/><rect x="11.8" y="11.9" width="8" height="1.4" fill="#9fe29f"/><rect x="11.8" y="15" width="8" height="1.4" fill="#9fe29f"/><path d="M7 17.6 H19.3" stroke="#a9e6a9" stroke-width="1.1"/><path d="M7.2 17.8 H12.4 L11.7 20.8 Q11.3 22.3 9.9 22.3 H9 Q7.6 22.3 7.4 20.8 Z" fill="#10b910" stroke="#a9e6a9" stroke-width="0.9"/><path d="M13.8 17.8 H19 L18.3 20.8 Q17.9 22.3 16.5 22.3 H15.6 Q14.2 22.3 14 20.8 Z" fill="#10b910" stroke="#a9e6a9" stroke-width="0.9"/></svg>
<div class="t " style="left:542.62px;top:565.109px;font-size:15.42px;color:#555;">Work Orders</div>
<svg class="b" style="left:706.5px;top:563.8px" width="18" height="18" viewBox="0 0 18 18"><circle cx="9" cy="9" r="8.5" fill="#16b51c"/><text x="9" y="14" font-size="13" font-weight="bold" font-family="Liberation Sans" text-anchor="middle" fill="#fff">$</text></svg>
<div class="t " style="left:728.00px;top:564.109px;font-size:16.20px;color:#555;letter-spacing:0.179px;">Payments</div>
<div class="b" style="left:275px;top:591px;width:1569px;height:43px;background:#efefef;border-radius:0 0 6px 6px"></div>
<div class="b" style="left:358.8px;top:593px;width:1.4px;height:40px;background:#ffffff"></div>
<div class="b" style="left:447px;top:593px;width:1.4px;height:40px;background:#ffffff"></div>
<div class="b" style="left:519.2px;top:593px;width:1.4px;height:40px;background:#ffffff"></div>
<div class="b" style="left:559.3px;top:593px;width:1.4px;height:40px;background:#ffffff"></div>
<div class="b" style="left:711.6px;top:593px;width:1.4px;height:40px;background:#ffffff"></div>
<div class="b" style="left:868.6px;top:593px;width:1.4px;height:40px;background:#ffffff"></div>
<div class="b" style="left:1158.6px;top:593px;width:1.4px;height:40px;background:#ffffff"></div>
<svg class="b" style="left:295.8px;top:604.5px" width="17" height="17" viewBox="0 0 17 17"><circle cx="8.5" cy="8.5" r="8.5" fill="#1479f0"/><rect x="7.45" y="3.0999999999999996" width="2.1" height="10.8" fill="#fff"/><rect x="3.0999999999999996" y="7.45" width="10.8" height="2.1" fill="#fff"/></svg>
<div class="t " style="left:318.22px;top:606.109px;font-size:14.70px;color:#222;">New</div>
<svg class="b" style="left:371px;top:604.5px" width="17" height="17" viewBox="0 0 17 17"><circle cx="8.5" cy="8.5" r="8.5" fill="#555"/><path d="M5.1 5.1 L11.9 11.9 M11.9 5.1 L5.1 11.9" stroke="#fff" stroke-width="2.4" stroke-linecap="round"/></svg>
<div class="t " style="left:393.49px;top:605.113px;font-size:15.16px;color:#b2b2b2;">Delete</div>
<svg class="b" style="left:459px;top:604.5px" width="17" height="17" viewBox="0 0 17 17"><circle cx="8.5" cy="8.5" r="8.5" fill="#4a4a4a"/><path d="M4.3 12.7 L4.9 10.4 L11 4.3 L12.7 6 L6.6 12.1 Z" fill="#fff"/><path d="M10.2 5.1 L11.9 6.8" stroke="#4a4a4a" stroke-width="0.6"/></svg>
<div class="t " style="left:480.95px;top:605.114px;font-size:15.66px;color:#b2b2b2;letter-spacing:0.299px;">Edit</div>
<svg class="b" style="left:530.8px;top:604.8px" width="17" height="17" viewBox="0 0 17 17"><rect x="0.5" y="0.5" width="16" height="16" rx="3.5" fill="#16b51c"/><rect x="3.3" y="3.3" width="4.6" height="4.6" rx="0.6" fill="#fff"/><rect x="9.1" y="3.3" width="4.6" height="4.6" rx="0.6" fill="#fff"/><rect x="3.3" y="9.1" width="4.6" height="4.6" rx="0.6" fill="#fff"/><rect x="9.1" y="9.1" width="4.6" height="4.6" rx="0.6" fill="#fff"/></svg>
<svg class="b" style="left:569.5px;top:604.5px" width="18" height="18" viewBox="0 0 18 18"><circle cx="9" cy="9" r="8.6" fill="#16b51c"/><text x="9" y="14" font-size="13" font-weight="bold" font-family="Liberation Sans" text-anchor="middle" fill="#fff">$</text></svg>
<div class="t " style="left:593.70px;top:605.112px;font-size:15.01px;color:#222;">Apply Insurance</div>
<svg class="b" style="left:722.5px;top:604.5px" width="18" height="18" viewBox="0 0 18 18"><polygon points="17.70,9.00 16.15,10.92 16.53,13.35 14.23,14.23 13.35,16.53 10.92,16.15 9.00,17.70 7.08,16.15 4.65,16.53 3.77,14.23 1.47,13.35 1.85,10.92 0.30,9.00 1.85,7.08 1.47,4.65 3.77,3.77 4.65,1.47 7.08,1.85 9.00,0.30 10.92,1.85 13.35,1.47 14.23,3.77 16.53,4.65 16.15,7.08" fill="#16b51c"/><text x="9" y="13.2" font-size="10.5" font-weight="bold" font-family="Liberation Sans" text-anchor="middle" fill="#fff">%</text></svg>
<div class="t " style="left:746.70px;top:605.112px;font-size:15.26px;color:#222;">Apply Promotion</div>
<div class="b" style="left:879.5px;top:599px;width:268px;height:28px;background:#fff;border-bottom:1px solid #cfcfcf;box-sizing:border-box"></div>
<div class="t " style="left:885.51px;top:605.101px;font-size:14.93px;color:#222;">Enter BarCode</div>
<svg class="b" style="left:1123px;top:601px" width="20" height="20" viewBox="0 0 20 20"><path d="M6 3 L15 1.5 Q17 1.5 17.5 3.5 L18 8 Q18 10 16 10.5 L14 11 L15.5 16 Q16 18 14 18 L12.5 18 Q11 18 10.8 16.5 L10 11.5 L7 12 Q5.5 12 5.2 10.5 L4.5 5 Q4.5 3.3 6 3 Z" fill="#fff" stroke="#222" stroke-width="1.2"/><path d="M7 4.5 L16 3.5" stroke="#222" stroke-width="0.9"/><rect x="1.5" y="14" width="1.2" height="4" fill="#222"/><rect x="3.4" y="14" width="1.2" height="4" fill="#222"/><rect x="5.3" y="14" width="1.2" height="4" fill="#222"/><rect x="7.2" y="14" width="1.2" height="4" fill="#222"/></svg>
<div class="b" style="left:275px;top:636px;width:1569px;height:31px;background:#f5f5f5;border-top:1px solid #d2d2d2;border-bottom:1px solid #d2d2d2;box-sizing:border-box"></div>
<div class="b" style="left:275px;top:667px;width:1569px;height:24.5px;background:#dedede"></div>
<div class="b" style="left:275px;top:691.5px;width:1569px;height:28px;background:#fff"></div>
<div class="b" style="left:1680px;top:692px;width:164px;height:27px;background:#f0f0f0"></div>
<div class="b" style="left:275px;top:719px;width:1569px;height:1px;background:#d2d2d2"></div>
<div class="b" style="left:301px;top:637px;width:1px;height:30px;background:#d2d2d2"></div>
<div class="b" style="left:301px;top:691.5px;width:1px;height:28px;background:#d2d2d2"></div>
<div class="b" style="left:347px;top:637px;width:1px;height:30px;background:#d2d2d2"></div>
<div class="b" style="left:347px;top:691.5px;width:1px;height:28px;background:#d2d2d2"></div>
<div class="b" style="left:393px;top:637px;width:1px;height:30px;background:#d2d2d2"></div>
<div class="b" style="left:393px;top:691.5px;width:1px;height:28px;background:#d2d2d2"></div>
<div class="b" style="left:696px;top:637px;width:1px;height:30px;background:#d2d2d2"></div>
<div class="b" style="left:696px;top:691.5px;width:1px;height:28px;background:#d2d2d2"></div>
<div class="b" style="left:807px;top:637px;width:1px;height:30px;background:#d2d2d2"></div>
<div class="b" style="left:807px;top:691.5px;width:1px;height:28px;background:#d2d2d2"></div>
<div class="b" style="left:869px;top:637px;width:1px;height:30px;background:#d2d2d2"></div>
<div class="b" style="left:869px;top:691.5px;width:1px;height:28px;background:#d2d2d2"></div>
<div class="b" style="left:1056px;top:637px;width:1px;height:30px;background:#d2d2d2"></div>
<div class="b" style="left:1056px;top:691.5px;width:1px;height:28px;background:#d2d2d2"></div>
<div class="b" style="left:1212px;top:637px;width:1px;height:30px;background:#d2d2d2"></div>
<div class="b" style="left:1212px;top:691.5px;width:1px;height:28px;background:#d2d2d2"></div>
<div class="b" style="left:1316px;top:637px;width:1px;height:30px;background:#d2d2d2"></div>
<div class="b" style="left:1316px;top:691.5px;width:1px;height:28px;background:#d2d2d2"></div>
<div class="b" style="left:1484px;top:637px;width:1px;height:30px;background:#d2d2d2"></div>
<div class="b" style="left:1484px;top:691.5px;width:1px;height:28px;background:#d2d2d2"></div>
<div class="b" style="left:1680px;top:637px;width:1px;height:30px;background:#d2d2d2"></div>
<div class="b" style="left:1680px;top:691.5px;width:1px;height:28px;background:#d2d2d2"></div>
<div class="b" style="left:317.5px;top:643.5px;width:15px;height:15px;border:2px solid #c8c8c8;background:#fff;box-sizing:border-box"></div>
<div class="b" style="left:317.5px;top:697.5px;width:15px;height:15px;border:2px solid #c8c8c8;background:#fff;box-sizing:border-box"></div>
<div class="t " style="left:401.22px;top:642.103px;font-size:15.12px;color:#1f2a44;font-weight:bold;letter-spacing:0.059px;">Product</div>
<svg class="b" style="left:677px;top:643px" width="10" height="14" viewBox="0 0 10 14"><ellipse cx="5" cy="4.6" rx="4.2" ry="4" fill="#a0a0a0"/><ellipse cx="4" cy="3.6" rx="1.3" ry="1.1" fill="#d8d8d8"/><rect x="4.2" y="8" width="1.6" height="5.5" fill="#a0a0a0"/></svg>
<div class="t " style="left:704.09px;top:642.111px;font-size:15.10px;color:#1f2a44;font-weight:bold;">Unit Price</div>
<svg class="b" style="left:788px;top:643px" width="10" height="14" viewBox="0 0 10 14"><ellipse cx="5" cy="4.6" rx="4.2" ry="4" fill="#a0a0a0"/><ellipse cx="4" cy="3.6" rx="1.3" ry="1.1" fill="#d8d8d8"/><rect x="4.2" y="8" width="1.6" height="5.5" fill="#a0a0a0"/></svg>
<div class="t " style="left:814.80px;top:642.100px;font-size:15.00px;color:#1f2a44;font-weight:bold;">Qty</div>
<svg class="b" style="left:849px;top:643px" width="10" height="14" viewBox="0 0 10 14"><ellipse cx="5" cy="4.6" rx="4.2" ry="4" fill="#a0a0a0"/><ellipse cx="4" cy="3.6" rx="1.3" ry="1.1" fill="#d8d8d8"/><rect x="4.2" y="8" width="1.6" height="5.5" fill="#a0a0a0"/></svg>
<div class="t " style="left:876.33px;top:643.104px;font-size:14.93px;color:#1f2a44;font-weight:bold;">Insurance Amount 1</div>
<svg class="b" style="left:1037px;top:643px" width="10" height="14" viewBox="0 0 10 14"><ellipse cx="5" cy="4.6" rx="4.2" ry="4" fill="#a0a0a0"/><ellipse cx="4" cy="3.6" rx="1.3" ry="1.1" fill="#d8d8d8"/><rect x="4.2" y="8" width="1.6" height="5.5" fill="#a0a0a0"/></svg>
<div class="t " style="left:1063.72px;top:642.103px;font-size:15.12px;color:#1f2a44;font-weight:bold;letter-spacing:0.077px;">Patient Amount</div>
<svg class="b" style="left:1192px;top:643px" width="10" height="14" viewBox="0 0 10 14"><ellipse cx="5" cy="4.6" rx="4.2" ry="4" fill="#a0a0a0"/><ellipse cx="4" cy="3.6" rx="1.3" ry="1.1" fill="#d8d8d8"/><rect x="4.2" y="8" width="1.6" height="5.5" fill="#a0a0a0"/></svg>
<div class="t " style="left:1220.16px;top:643.105px;font-size:14.46px;color:#1f2a44;font-weight:bold;">Tax Code</div>
<svg class="b" style="left:1296px;top:643px" width="10" height="14" viewBox="0 0 10 14"><ellipse cx="5" cy="4.6" rx="4.2" ry="4" fill="#a0a0a0"/><ellipse cx="4" cy="3.6" rx="1.3" ry="1.1" fill="#d8d8d8"/><rect x="4.2" y="8" width="1.6" height="5.5" fill="#a0a0a0"/></svg>
<div class="t " style="left:1323.73px;top:642.100px;font-size:15.00px;color:#1f2a44;font-weight:bold;">Discount Amount</div>
<svg class="b" style="left:1464px;top:643px" width="10" height="14" viewBox="0 0 10 14"><ellipse cx="5" cy="4.6" rx="4.2" ry="4" fill="#a0a0a0"/><ellipse cx="4" cy="3.6" rx="1.3" ry="1.1" fill="#d8d8d8"/><rect x="4.2" y="8" width="1.6" height="5.5" fill="#a0a0a0"/></svg>
<div class="t " style="left:1491.72px;top:642.114px;font-size:15.10px;color:#1f2a44;font-weight:bold;">Discount Percentage</div>
<svg class="b" style="left:1661px;top:643px" width="10" height="14" viewBox="0 0 10 14"><ellipse cx="5" cy="4.6" rx="4.2" ry="4" fill="#a0a0a0"/><ellipse cx="4" cy="3.6" rx="1.3" ry="1.1" fill="#d8d8d8"/><rect x="4.2" y="8" width="1.6" height="5.5" fill="#a0a0a0"/></svg>
<div class="t " style="left:1688.03px;top:643.115px;font-size:14.72px;color:#1f2a44;font-weight:bold;">Amount With Tax</div>
<svg class="b" style="left:1824px;top:643px" width="10" height="14" viewBox="0 0 10 14"><ellipse cx="5" cy="4.6" rx="4.2" ry="4" fill="#a0a0a0"/><ellipse cx="4" cy="3.6" rx="1.3" ry="1.1" fill="#d8d8d8"/><rect x="4.2" y="8" width="1.6" height="5.5" fill="#a0a0a0"/></svg>
<svg class="b" style="left:280px;top:669px" width="16" height="16" viewBox="0 0 16 16"><circle cx="8" cy="8" r="6.8" fill="none" stroke="#bdbdbd" stroke-width="1.3"/><path d="M5.5 5.5 L10 10 M10 6.5 V10 H6.5" fill="none" stroke="#bdbdbd" stroke-width="1.3"/></svg>
<div class="t " style="left:310.10px;top:671.108px;font-size:14.26px;color:#222;font-weight:bold;">Work Order: (Count=1)</div>
<svg class="b" style="left:361px;top:696.5px" width="18" height="18" viewBox="0 0 18 18"><circle cx="9" cy="9" r="8.6" fill="#0d50b0"/><path d="M4.6 13.4 L5.2 11 L11.6 4.6 L13.4 6.4 L7 12.8 Z" fill="#fff"/><path d="M10.8 5.4 L12.6 7.2" stroke="#0d50b0" stroke-width="0.6"/></svg>
<div class="t " style="left:401.77px;top:697.113px;font-size:14.22px;color:#222;">ZEISS SV EnergizeMe Digital EnergizeMe</div>
<div class="t " style="left:722.68px;top:697.108px;font-size:14.42px;color:#222;">CAD 375.00</div>
<div class="t " style="left:855.78px;top:697.113px;font-size:14.94px;color:#222;">1</div>
<div class="t " style="left:987.58px;top:697.111px;font-size:14.45px;color:#222;">CAD 0.00</div>
<div class="t " style="left:1126.38px;top:697.108px;font-size:14.42px;color:#222;">CAD 375.00</div>
<div class="t " style="left:1415.58px;top:697.111px;font-size:14.45px;color:#222;">CAD 0.00</div>
<div class="t " style="left:1633.63px;top:697.100px;font-size:14.31px;color:#222;">0.00%</div>
<div class="t " style="left:1754.80px;top:696.103px;font-size:15.12px;color:#111;font-weight:bold;">CAD 375.00</div>
<div class="t " style="left:300.06px;top:734.106px;font-size:14.30px;color:#222;">Page 1 of 1 (2 items)</div>
<svg class="b" style="left:456px;top:728px" width="26" height="26" viewBox="0 0 26 26"><circle cx="13" cy="13" r="12" fill="none" stroke="#ddd" stroke-width="1.6"/><path d="M14.5 9 L10.5 13 L14.5 17 Z" fill="#ccc"/></svg>
<div class="b" style="left:489px;top:732px;width:36px;height:20px;background:#1f2a44;border-radius:10px"></div>
<div class="t " style="left:503.41px;top:734.106px;font-size:14.89px;color:#fff;font-weight:bold;">1</div>
<svg class="b" style="left:532.5px;top:728px" width="26" height="26" viewBox="0 0 26 26"><circle cx="13" cy="13" r="12" fill="none" stroke="#ddd" stroke-width="1.6"/><path d="M11.5 9 L15.5 13 L11.5 17 Z" fill="#ccc"/></svg>
<div class="t " style="left:1708.32px;top:734.104px;font-size:14.71px;color:#222;">Page size:</div>
<div class="b" style="left:1779.5px;top:727px;width:51.5px;height:30px;border:1px solid #cfcfcf;box-sizing:border-box;background:#fff"></div>
<div class="t " style="left:1783.91px;top:735.110px;font-size:15.82px;color:#111;">200</div>
<svg class="b" style="left:1816.5px;top:740px" width="8" height="5" viewBox="0 0 8 5"><path d="M0.5 0.5 H7.5 L4 4.5 Z" fill="#777"/></svg>
<div class="b" style="left:275px;top:766px;width:1569px;height:1px;background:#cfcfcf"></div>
<div class="b" style="left:1532px;top:771px;width:144px;height:39px;border:1px solid #a9adb5;border-radius:5px;box-sizing:border-box;background:#fff"></div>
<svg class="b" style="left:1547px;top:782px" width="17" height="17" viewBox="0 0 17 17"><path d="M0 1 Q0 0 1 0 H13.5 L17 3.5 V16 Q17 17 16 17 H1 Q0 17 0 16 Z" fill="#1e9a1e"/><rect x="5.3" y="0.3" width="6.4" height="4.6" fill="none" stroke="#bfe8bf" stroke-width="1"/><rect x="3.6" y="10.6" width="9.8" height="6.6" fill="none" stroke="#bfe8bf" stroke-width="1"/></svg>
<div class="t " style="left:1568.03px;top:783.109px;font-size:14.86px;color:#8b8f9a;">Save changes</div>
<div class="b" style="left:1680px;top:771px;width:157px;height:39px;border:1px solid #a9adb5;border-radius:5px;box-sizing:border-box;background:#fff"></div>
<svg class="b" style="left:1694px;top:781px" width="20" height="20" viewBox="0 0 20 20"><path d="M8.3 1.5 L1 8.6 L8.3 15.5 V11.2 C12.5 11.2 15.6 13.5 17.3 18.5 C18.6 11.5 15 6.6 8.3 6.4 Z" fill="#f29a2e" stroke="#f29a2e" stroke-width="0.6" stroke-linejoin="round"/></svg>
<div class="t " style="left:1715.95px;top:783.104px;font-size:14.96px;color:#8b8f9a;">Cancel changes</div>
<div class="b" style="left:1378px;top:840px;width:90px;height:40px;background:#219617;border-radius:5px"></div>
<div class="t " style="left:1404.99px;top:853.110px;font-size:15.85px;color:#fff;">Save</div>
<div class="b" style="left:1473px;top:840px;width:137px;height:40px;background:#135f1c;border-radius:5px"></div>
<div class="t " style="left:1485.79px;top:853.101px;font-size:15.84px;color:#fff;">Save and Close</div>
<div class="b" style="left:1615px;top:840px;width:130px;height:40px;background:#135f1c;border-radius:5px"></div>
<div class="t " style="left:1628.49px;top:853.112px;font-size:15.82px;color:#fff;">Save and New</div>
<div class="b" style="left:1757px;top:840px;width:90px;height:40px;background:#f2a232;border-radius:5px"></div>
<div class="t " style="left:1776.67px;top:853.102px;font-size:16.53px;color:#fff;">Cancel</div>
</body></html>
